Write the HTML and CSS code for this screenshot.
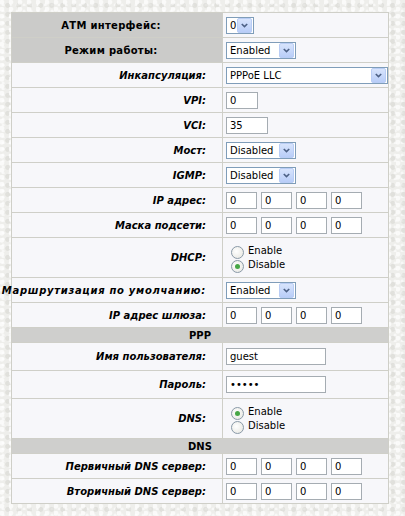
FILE: index.html
```html
<!DOCTYPE html>
<html lang="ru">
  <head>
    <meta charset="UTF-8" />
    <title>WAN</title>
    <link rel="stylesheet" href="styles.css">
  </head>
  <body>
    <div class="page">
      <table class="cfg">
        <colgroup>
          <col class="col-label" />
          <col class="col-value" />
        </colgroup>

        <tr class="row">
          <td class="label dark"><div class="label-in plain">АТМ интерфейс:</div></td>
          <td class="value">
            <div class="sel w-atm"><span class="sel-text">0</span><span class="sel-btn"><svg viewBox="0 0 9 6"><path d="M1 1 L4.5 4.5 L8 1"/></svg></span></div>
          </td>
        </tr>
        <tr class="row">
          <td class="label dark"><div class="label-in plain">Режим работы:</div></td>
          <td class="value">
            <div class="sel w-short"><span class="sel-text">Enabled</span><span class="sel-btn"><svg viewBox="0 0 9 6"><path d="M1 1 L4.5 4.5 L8 1"/></svg></span></div>
          </td>
        </tr>
        <tr class="row">
          <td class="label"><div class="label-in">Инкапсуляция:</div></td>
          <td class="value">
            <div class="sel w-long"><span class="sel-text">PPPoE LLC</span><span class="sel-btn"><svg viewBox="0 0 9 6"><path d="M1 1 L4.5 4.5 L8 1"/></svg></span></div>
          </td>
        </tr>
        <tr class="row">
          <td class="label"><div class="label-in">VPI:</div></td>
          <td class="value"><input class="txt w-vpi" type="text" value="0" /></td>
        </tr>
        <tr class="row">
          <td class="label"><div class="label-in">VCI:</div></td>
          <td class="value"><input class="txt w-vci" type="text" value="35" /></td>
        </tr>
        <tr class="row">
          <td class="label"><div class="label-in">Мост:</div></td>
          <td class="value">
            <div class="sel w-short"><span class="sel-text">Disabled</span><span class="sel-btn"><svg viewBox="0 0 9 6"><path d="M1 1 L4.5 4.5 L8 1"/></svg></span></div>
          </td>
        </tr>
        <tr class="row">
          <td class="label"><div class="label-in">IGMP:</div></td>
          <td class="value">
            <div class="sel w-short"><span class="sel-text">Disabled</span><span class="sel-btn"><svg viewBox="0 0 9 6"><path d="M1 1 L4.5 4.5 L8 1"/></svg></span></div>
          </td>
        </tr>
        <tr class="row">
          <td class="label"><div class="label-in">IP адрес:</div></td>
          <td class="value">
            <div class="ip">
              <input class="txt w-ip" type="text" value="0" />
              <input class="txt w-ip" type="text" value="0" />
              <input class="txt w-ip" type="text" value="0" />
              <input class="txt w-ip" type="text" value="0" />
            </div>
          </td>
        </tr>
        <tr class="row">
          <td class="label"><div class="label-in">Маска подсети:</div></td>
          <td class="value">
            <div class="ip">
              <input class="txt w-ip" type="text" value="0" />
              <input class="txt w-ip" type="text" value="0" />
              <input class="txt w-ip" type="text" value="0" />
              <input class="txt w-ip" type="text" value="0" />
            </div>
          </td>
        </tr>
        <tr class="row-radio">
          <td class="label"><div class="label-in">DHCP:</div></td>
          <td class="value">
            <div class="radios">
              <label class="radio"><span class="dot"></span>Enable</label>
              <label class="radio"><span class="dot on"></span>Disable</label>
            </div>
          </td>
        </tr>
        <tr class="row">
          <td class="label"><div class="label-in wide">Маршрутизация по умолчанию:</div></td>
          <td class="value">
            <div class="sel w-short"><span class="sel-text">Enabled</span><span class="sel-btn"><svg viewBox="0 0 9 6"><path d="M1 1 L4.5 4.5 L8 1"/></svg></span></div>
          </td>
        </tr>
        <tr class="row">
          <td class="label"><div class="label-in">IP адрес шлюза:</div></td>
          <td class="value">
            <div class="ip">
              <input class="txt w-ip" type="text" value="0" />
              <input class="txt w-ip" type="text" value="0" />
              <input class="txt w-ip" type="text" value="0" />
              <input class="txt w-ip" type="text" value="0" />
            </div>
          </td>
        </tr>

        <tr class="row-head">
          <td colspan="2" class="head">PPP</td>
        </tr>
        <tr class="row-tall">
          <td class="label"><div class="label-in">Имя пользователя:</div></td>
          <td class="value"><input class="txt w-user" type="text" value="guest" /></td>
        </tr>
        <tr class="row-tall">
          <td class="label"><div class="label-in">Пароль:</div></td>
          <td class="value"><input class="txt w-user" type="password" value="guest" /></td>
        </tr>
        <tr class="row-radio">
          <td class="label"><div class="label-in">DNS:</div></td>
          <td class="value">
            <div class="radios">
              <label class="radio"><span class="dot on"></span>Enable</label>
              <label class="radio"><span class="dot"></span>Disable</label>
            </div>
          </td>
        </tr>

        <tr class="row-head">
          <td colspan="2" class="head">DNS</td>
        </tr>
        <tr class="row">
          <td class="label"><div class="label-in">Первичный DNS сервер:</div></td>
          <td class="value">
            <div class="ip">
              <input class="txt w-ip" type="text" value="0" />
              <input class="txt w-ip" type="text" value="0" />
              <input class="txt w-ip" type="text" value="0" />
              <input class="txt w-ip" type="text" value="0" />
            </div>
          </td>
        </tr>
        <tr class="row">
          <td class="label"><div class="label-in">Вторичный DNS сервер:</div></td>
          <td class="value">
            <div class="ip">
              <input class="txt w-ip" type="text" value="0" />
              <input class="txt w-ip" type="text" value="0" />
              <input class="txt w-ip" type="text" value="0" />
              <input class="txt w-ip" type="text" value="0" />
            </div>
          </td>
        </tr>
      </table>
    </div>
  </body>
</html>
```

FILE: styles.css
```css
body {
  margin: 0;
  background-color: #eeeeeb;
  background-image:
    radial-gradient(circle at 20% 30%, rgba(255, 255, 255, 0.7) 0 2px, transparent 3px),
    radial-gradient(circle at 70% 60%, rgba(210, 210, 205, 0.5) 0 2px, transparent 3px),
    radial-gradient(circle at 45% 85%, rgba(255, 255, 255, 0.6) 0 1px, transparent 2px);
  background-size: 9px 7px, 11px 9px, 7px 6px;
  font-family: "DejaVu Sans", Verdana, sans-serif;
  font-size: 10px;
  color: #000;
}
.page {
  padding: 12px 0 0 11px;
}
.cfg {
  border-collapse: collapse;
  table-layout: fixed;
  width: 378px;
  border: 1px solid #b4b4ae;
}
.col-label {
  width: 211px;
}
.cfg td {
  border: 1px solid #cfcfc8;
  padding: 0;
  background-color: #f7f7fa;
}
.row {
  height: 25px;
}
.row-tall {
  height: 28px;
}
.row-radio {
  height: 40px;
}
.row-head {
  height: 15px;
}
.cfg td.dark {
  background-color: #cbcbc9;
}
.cfg td.head {
  background-color: #cfcfcd;
  text-align: center;
  font-weight: bold;
}
.label-in {
  display: flex;
  justify-content: flex-end;
  white-space: nowrap;
  padding-right: 16px;
  font-weight: bold;
  font-style: italic;
}
.label-in.plain {
  font-style: normal;
  justify-content: center;
  padding-right: 12px;
  letter-spacing: 0.3px;
}
.label-in.wide {
  letter-spacing: 0.7px;
}
.value {
  padding-left: 3px !important;
}

/* selects drawn by hand */
.sel {
  display: flex;
  align-items: center;
  box-sizing: border-box;
  height: 17px;
  border: 1px solid #7f9db9;
  background-color: #fff;
}
.sel-text {
  flex: 1;
  padding-left: 3px;
  line-height: 15px;
}
.sel-btn {
  display: flex;
  align-items: center;
  justify-content: center;
  width: 13px;
  height: 13px;
  margin-right: 1px;
  border: 1px solid #b9cdf5;
  border-radius: 2px;
  background: linear-gradient(#d8e4fc, #b8cdf8);
}
.sel-btn svg {
  width: 7px;
  height: 5px;
  fill: none;
  stroke: #4d6185;
  stroke-width: 2;
}
.w-atm {
  width: 28px;
}
.w-short {
  width: 70px;
}
.w-long {
  width: 162px;
}

.txt {
  box-sizing: border-box;
  height: 17px;
  margin: 0;
  padding: 0 3px;
  border: 1px solid #a5acb2;
  background-color: #fff;
  font-family: "DejaVu Sans", Verdana, sans-serif;
  font-size: 10px;
  color: #000;
  display: block;
}
.w-vpi {
  width: 32px;
}
.w-vci {
  width: 42px;
}
.w-ip {
  width: 31px;
}
.w-user {
  width: 100px;
}
.ip {
  display: flex;
  gap: 4px;
}

.radios {
  display: flex;
  flex-direction: column;
  padding-left: 5px;
}
.radio {
  display: flex;
  align-items: center;
  height: 14px;
  gap: 4px;
}
.dot {
  box-sizing: border-box;
  width: 13px;
  height: 13px;
  border-radius: 50%;
  border: 1px solid #8a9aa8;
  background: radial-gradient(circle at 40% 40%, #fff, #e4e4de);
  position: relative;
  margin-top: 4px;
}
.dot.on::after {
  content: "";
  position: absolute;
  left: 3px;
  top: 3px;
  width: 5px;
  height: 5px;
  border-radius: 50%;
  background-color: #46a646;
}
```
